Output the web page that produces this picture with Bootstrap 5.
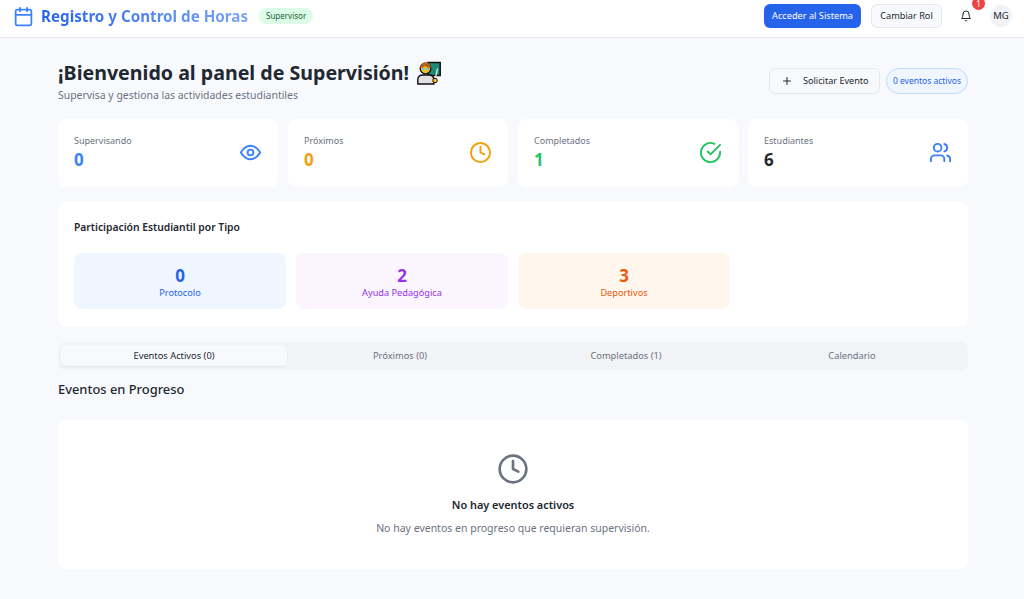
<!DOCTYPE html>
<html lang="es">
<head>
  <meta charset="UTF-8">
  <title>Registro y Control de Horas</title>
  <link href="https://cdn.jsdelivr.net/npm/bootstrap@5.3.0/dist/css/bootstrap.min.css" rel="stylesheet">
  <script src="https://cdn.jsdelivr.net/npm/bootstrap@5.3.0/dist/js/bootstrap.bundle.min.js"></script>
  <style>
    body { background: #f8f9fd; font-family: "Noto Sans", sans-serif; color: #222831; height: 599px; overflow: hidden; }
    .top-bar { height: 38px; background: #fff; border-bottom: 1px solid #e4e7ec; padding: 0 12px 5px 13px; }
    .brand-name { font-size: 15.2px; font-weight: 700; margin-left: 7px; background: linear-gradient(90deg, #2563eb, #7aa5fa); -webkit-background-clip: text; background-clip: text; color: transparent; }
    .role-pill { font-size: 8px; background: #dcfce7; color: #166534; border-radius: 10px; padding: 2px 7px; margin-left: 11px; }
    .btn-enter { font-size: 9.2px; background: #2563eb; color: #fff; border-radius: 6px; height: 24px; width: 97px; padding: 0; border: 0; }
    .btn-role { font-size: 9.2px; background: #f8f9fd; color: #222831; border: 1px solid #e4e7ec; border-radius: 6px; height: 24px; width: 71px; padding: 0; margin-left: 10px; }
    .bell-wrap { width: 24px; height: 24px; margin-left: 12px; }
    .bell-count { position: absolute; top: -7px; right: -7px; width: 13px; height: 13px; border-radius: 50%; background: #ef4444; color: #fff; font-size: 8px; line-height: 13px; text-align: center; }
    .avatar-mg { width: 22px; height: 22px; border-radius: 50%; background: #f1f3f6; font-size: 9.5px; margin-left: 12px; }
    .page-body { padding: 21px 56px 0 58px; }
    .welcome-title { font-size: 19.6px; font-weight: 700; line-height: 28px; margin: 0; display: flex; align-items: center; gap: 8px; }
    .welcome-sub { font-size: 10.45px; color: #6b7280; line-height: 16px; margin: 0; }
    .btn-request { font-size: 9.1px; background: #f8f9fd; border: 1px solid #e4e7ec; border-radius: 6px; height: 26px; width: 111px; padding: 0 0 0 11px; color: #222831; gap: 10px; }
    .active-pill { font-size: 8.5px; color: #2563eb; background: #eff6ff; border: 1px solid #bfdbfe; border-radius: 14px; height: 26px; width: 82px; margin-left: 6px; }
    .stat-row { margin-top: 16px; gap: 10px; }
    .stat-box { background: #fff; border-radius: 8px; height: 68px; padding: 0 16px 2px; flex: 1 1 0; min-width: 0; }
    .stat-label { font-size: 9px; color: #6b7280; line-height: 14px; }
    .stat-value { font-size: 17px; font-weight: 700; line-height: 20px; margin-top: 2px; }
    .panel-white { background: #fff; border-radius: 8px; }
    .type-panel { margin-top: 15px; height: 125px; padding: 17px 16px 0; }
    .panel-title { font-size: 10.3px; font-weight: 600; line-height: 16px; margin: 0; }
    .type-grid { display: grid; grid-template-columns: repeat(4, 1fr); gap: 10px; margin-top: 18px; }
    .type-tile { height: 56px; border-radius: 8px; text-align: center; padding-top: 13px; }
    .type-num { font-size: 17px; font-weight: 700; line-height: 20px; }
    .type-name { font-size: 9.2px; line-height: 13px; }
    .tab-strip { background: #f1f3f6; border-radius: 7px; height: 28px; padding: 3px; margin-top: 15px; display: grid; grid-template-columns: repeat(4, 1fr); }
    .tab-item { font-size: 9.3px; color: #6b7280; border-radius: 5px; height: 21px; line-height: 22px; text-align: center; }
    .tab-on { background: #f8f9fd; color: #222831; box-shadow: 0 1px 2px rgba(0, 0, 0, .06); }
    .section-name { font-size: 12.9px; font-weight: 500; line-height: 20px; margin: 9px 0 21px; }
    .empty-box { height: 149px; padding-top: 33px; }
    .empty-title { font-size: 10.9px; font-weight: 600; line-height: 16px; margin: 12px 0 7px; }
    .empty-text { font-size: 10.5px; color: #6b7280; line-height: 16px; margin: 0; }
  </style>
</head>
<body>
  <header class="top-bar d-flex align-items-center">
    <svg width="21" height="21" viewBox="0 0 24 24" fill="none" stroke="#3b82f6" stroke-width="2" stroke-linecap="round" stroke-linejoin="round"><path d="M8 2v4M16 2v4"/><rect x="3" y="4" width="18" height="18" rx="2"/><path d="M3 10h18"/></svg>
    <span class="brand-name">Registro y Control de Horas</span>
    <span class="role-pill">Supervisor</span>
    <div class="ms-auto d-flex align-items-center">
      <button class="btn-enter">Acceder al Sistema</button>
      <button class="btn-role">Cambiar Rol</button>
      <div class="bell-wrap position-relative d-flex align-items-center justify-content-center">
        <svg width="12" height="12" viewBox="0 0 24 24" fill="none" stroke="#222831" stroke-width="2" stroke-linecap="round" stroke-linejoin="round"><path d="M6 8a6 6 0 0 1 12 0c0 7 3 9 3 9H3s3-2 3-9"/><path d="M10.3 21a1.94 1.94 0 0 0 3.4 0"/></svg>
        <span class="bell-count">1</span>
      </div>
      <div class="avatar-mg d-flex align-items-center justify-content-center">MG</div>
    </div>
  </header>

  <main class="page-body">
    <div class="d-flex justify-content-between align-items-center">
      <div>
        <h1 class="welcome-title">¡Bienvenido al panel de Supervisión!
          <svg width="24" height="24" viewBox="0 0 24 24">
            <rect x="11" y="1.5" width="12.2" height="13" fill="#1f8a7a" stroke="#111" stroke-width="1.5"/>
            <path d="M0.8 23v-4.5c0-3 2.500-4.500 5-4.500h6c3 0 5 1.500 5 4.500v4.500z" fill="#e0e0e0" stroke="#111" stroke-width="1.4"/>
            <circle cx="8.500" cy="7.500" r="5.300" fill="#f7c325" stroke="#111" stroke-width="1.300"/>
            <path d="M3.300 7c0-3.600 2.300-5.500 5.200-5.500s5.300 1.900 5.300 5.500c-2.500 0-4.500-.6-5.800-2-.8 1.300-2.500 2-4.700 2z" fill="#b5651d"/>
            <path d="M5 8.200h2.600M9.500 8.200h2.600" stroke="#4fc3f7" stroke-width="1.800"/>
            <path d="M20.500 7.500 18 19" stroke="#f5f0d0" stroke-width="1.200"/>
            <circle cx="18" cy="19.500" r="2.300" fill="#f7c325" stroke="#111" stroke-width="1"/>
          </svg>
        </h1>
        <p class="welcome-sub">Supervisa y gestiona las actividades estudiantiles</p>
      </div>
      <div class="d-flex align-items-center">
        <button class="btn-request d-flex align-items-center">
          <svg width="12" height="12" viewBox="0 0 24 24" fill="none" stroke="#222831" stroke-width="2" stroke-linecap="round"><path d="M5 12h14M12 5v14"/></svg>
          <span>Solicitar Evento</span>
        </button>
        <div class="active-pill d-flex align-items-center justify-content-center">0 eventos activos</div>
      </div>
    </div>

    <div class="d-flex stat-row">
      <div class="stat-box d-flex align-items-center justify-content-between">
        <div><div class="stat-label">Supervisando</div><div class="stat-value" style="color:#3b82f6">0</div></div>
        <svg width="23" height="23" viewBox="0 0 24 24" fill="none" stroke="#3b82f6" stroke-width="2" stroke-linecap="round" stroke-linejoin="round"><path d="M2 12s3.500-7 10-7 10 7 10 7-3.500 7-10 7-10-7-10-7Z"/><circle cx="12" cy="12" r="3"/></svg>
      </div>
      <div class="stat-box d-flex align-items-center justify-content-between">
        <div><div class="stat-label">Próximos</div><div class="stat-value" style="color:#f59e0b">0</div></div>
        <svg width="23" height="23" viewBox="0 0 24 24" fill="none" stroke="#f59e0b" stroke-width="2" stroke-linecap="round" stroke-linejoin="round"><circle cx="12" cy="12" r="10"/><path d="M12 6v6l4 2"/></svg>
      </div>
      <div class="stat-box d-flex align-items-center justify-content-between">
        <div><div class="stat-label">Completados</div><div class="stat-value" style="color:#22c55e">1</div></div>
        <svg width="23" height="23" viewBox="0 0 24 24" fill="none" stroke="#22c55e" stroke-width="2" stroke-linecap="round" stroke-linejoin="round"><path d="M22 11.100V12a10 10 0 1 1-5.900-9.100"/><path d="m9 11 3 3L22 4"/></svg>
      </div>
      <div class="stat-box d-flex align-items-center justify-content-between">
        <div><div class="stat-label">Estudiantes</div><div class="stat-value">6</div></div>
        <svg width="23" height="23" viewBox="0 0 24 24" fill="none" stroke="#3b82f6" stroke-width="2" stroke-linecap="round" stroke-linejoin="round"><path d="M16 21v-2a4 4 0 0 0-4-4H6a4 4 0 0 0-4 4v2"/><circle cx="9" cy="7" r="4"/><path d="M22 21v-2a4 4 0 0 0-3-3.870"/><path d="M16 3.130a4 4 0 0 1 0 7.750"/></svg>
      </div>
    </div>

    <section class="panel-white type-panel">
      <h2 class="panel-title">Participación Estudiantil por Tipo</h2>
      <div class="type-grid">
        <div class="type-tile" style="background:#eff6ff"><div class="type-num" style="color:#2563eb">0</div><div class="type-name" style="color:#2563eb">Protocolo</div></div>
        <div class="type-tile" style="background:#faf5ff"><div class="type-num" style="color:#9333ea">2</div><div class="type-name" style="color:#9333ea">Ayuda Pedagógica</div></div>
        <div class="type-tile" style="background:#fff7ed"><div class="type-num" style="color:#ea580c">3</div><div class="type-name" style="color:#ea580c">Deportivos</div></div>
      </div>
    </section>

    <nav class="tab-strip">
      <div class="tab-item tab-on">Eventos Activos (0)</div>
      <div class="tab-item">Próximos (0)</div>
      <div class="tab-item">Completados (1)</div>
      <div class="tab-item">Calendario</div>
    </nav>

    <h3 class="section-name">Eventos en Progreso</h3>
    <section class="panel-white empty-box text-center">
      <svg width="32" height="32" viewBox="0 0 24 24" fill="none" stroke="#6b7280" stroke-width="2" stroke-linecap="round" stroke-linejoin="round"><circle cx="12" cy="12" r="10"/><path d="M12 6v6l4 2"/></svg>
      <h4 class="empty-title">No hay eventos activos</h4>
      <p class="empty-text">No hay eventos en progreso que requieran supervisión.</p>
    </section>
  </main>
</body>
</html>
